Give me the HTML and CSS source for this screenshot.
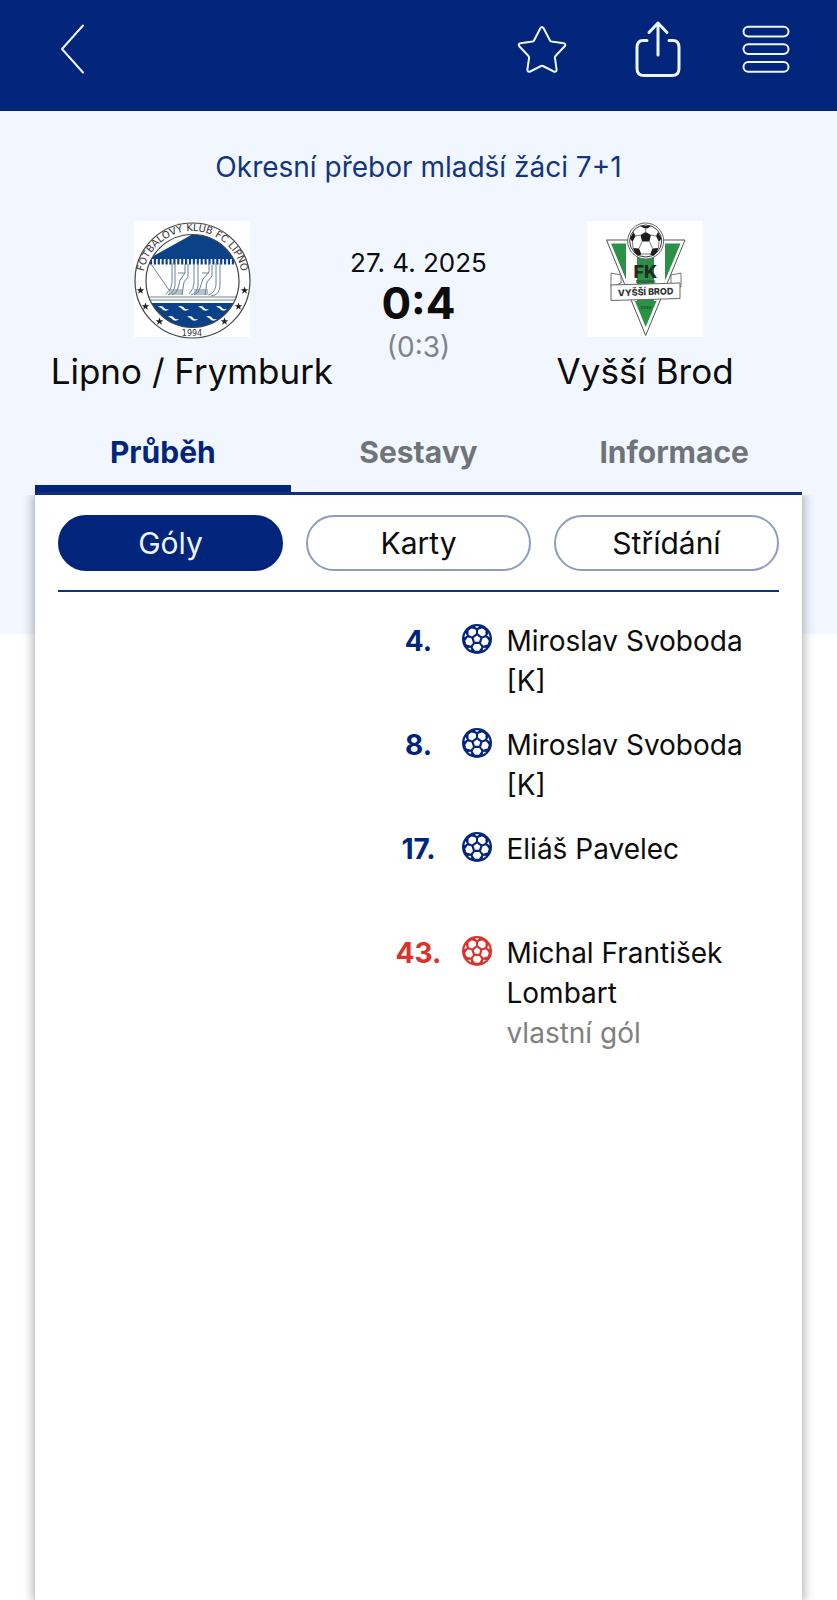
FILE: index.html
```html
<!DOCTYPE html>
<html lang="cs">
    <head>
        <meta charset="utf-8">
        <meta name="viewport" content="width=device-width, initial-scale=1">
        <title>Lipno / Frymburk – Vyšší Brod</title>
        <link rel="stylesheet" href="styles.css">
    </head>
    <body>
        <!-- shared symbols -->
        <svg class="sprite" aria-hidden="true">
            <symbol id="ball" viewBox="0 0 30 30">
                <circle cx="15" cy="15" r="15" fill="currentColor"/>
                <g fill="#fff" stroke="#fff" stroke-width="2" stroke-linejoin="round">
                    <path d="M13 21h4l1.300 2.200-1.900 2.600h-2.800l-1.900-2.600z"/>
                    <path d="M13 21h4l1.300 2.200-1.900 2.600h-2.800l-1.900-2.600z" transform="rotate(72 15 15)"/>
                    <path d="M13 21h4l1.300 2.200-1.900 2.600h-2.800l-1.900-2.600z" transform="rotate(144 15 15)"/>
                    <path d="M13 21h4l1.300 2.200-1.900 2.600h-2.800l-1.900-2.600z" transform="rotate(216 15 15)"/>
                    <path d="M13 21h4l1.300 2.200-1.900 2.600h-2.800l-1.900-2.600z" transform="rotate(288 15 15)"/>
                </g>
                <path d="M15 11.500l3.300 2.400-1.200 3.900h-4.200l-1.200-3.900z" fill="#fff"/>
                <g fill="#fff">
                    <path d="M12.800 2.300h4.400L15 4.300z"/>
                    <path d="M12.800 2.300h4.400L15 4.300z" transform="rotate(72 15 15)"/>
                    <path d="M12.800 2.300h4.400L15 4.300z" transform="rotate(144 15 15)"/>
                    <path d="M12.800 2.300h4.400L15 4.300z" transform="rotate(216 15 15)"/>
                    <path d="M12.800 2.300h4.400L15 4.300z" transform="rotate(288 15 15)"/>
                </g>
            </symbol>
            <symbol id="star" viewBox="-5 -5 10 10">
                <path d="M0-3.600L.9-1.100 3.500-1.100 1.400.4 2.200 3 0 1.400-2.200 3-1.400.4-3.500-1.100-.9-1.100z" fill="#222"/>
            </symbol>
            <symbol id="wave" viewBox="0 0 12 6">
                <path d="M0 1.200C3-.5 5 .4 6.500 2.200S9.600 4 12 3.600C10 6 6.500 6 5 4.200S2.500 2 0 1.200z" fill="#fff"/>
            </symbol>
        </svg>

        <header class="topbar">
            <button class="icon-button" type="button" aria-label="Zpět">
                <svg width="50" height="60" viewBox="0 0 50 60">
                    <path d="M35 7.500L14 31l21 23.500"/>
                </svg>
            </button>
            <div class="topbar-actions">
                <button class="icon-button" type="button" aria-label="Oblíbené">
                    <svg width="50" height="60" viewBox="0 0 50 60">
                        <path d="M23.500 10q1.500-2.200 3 0L33 22.500q.4.800 1.400 1l12.300 1.800q2.600.8 1 3L38.500 38q-.7.700-.6 1.600l1.700 11.900q0 3-2.800 2L25.900 48q-.9-.4-1.800 0L13.200 53.500q-2.800 1-2.800-2l1.700-11.900q.1-.9-.6-1.600L2.300 28.300q-1.600-2.200 1-3l12.300-1.800q1-.2 1.400-1z"/>
                    </svg>
                </button>
                <button class="icon-button" type="button" aria-label="Sdílet">
                    <svg class="bold" width="50" height="60" viewBox="-4 0 50 60">
                        <path d="M14 22.500h-4q-6 0-6 7v21q0 7 7 7h28q7 0 7-7v-21q0-7-6-7h-4"/>
                        <path d="M25 37V5M16 14.500L25 5l9 9.500"/>
                    </svg>
                </button>
                <button class="icon-button" type="button" aria-label="Menu">
                    <svg width="50" height="60" viewBox="0 0 50 60">
                        <rect x="2.500" y="8.700" width="45" height="9.700" rx="4.800"/>
                        <rect x="2.500" y="26.200" width="45" height="9.700" rx="4.800"/>
                        <rect x="2.500" y="44" width="45" height="9.700" rx="4.800"/>
                    </svg>
                </button>
            </div>
        </header>

        <main class="match">
            <h1 class="competition"><a href="#">Okresní přebor mladší žáci 7+1</a></h1>

            <section class="scoreboard">
                <div class="team">
                    <svg class="crest" viewBox="0 0 116 116" role="img" aria-label="FC Lipno">
                        <defs>
                            <path id="ring" d="M10.200 72A49.800 49.800 0 1 1 106.800 72"/>
                            <clipPath id="inner"><circle cx="58.500" cy="60" r="46.500"/></clipPath>
                        </defs>
                        <rect width="116" height="116" fill="#fff"/>
                        <circle cx="58.500" cy="59.500" r="57.500" fill="#fff" stroke="#444" stroke-width="1.200"/>
                        <g clip-path="url(#inner)">
                            <path d="M14 38L59 13h50v25z" fill="#0b4187"/>
                            <path d="M12 40.500h94" stroke="#0b4187" stroke-width="6" stroke-dasharray="2.200 1.700"/>
                            <g fill="none" stroke="#6d8496" stroke-width="1">
                                <path d="M17 43l18 26M38 42v20q0 6-6 11M41 42v22q-1 8-7 10M51 43v9l-5 7-2 8q-1 5-6 7M54 43v13l-4 5-2 13M60 42v20q0 6-5 11M64 42v22q0 8-7 10M75 42v9l-6 7-3 9q-1 5-6 7M78 44v11l-5 6-2 13M82 42v22q-1 8-8 10M86 42v22q0 10-9 11"/>
                                <path d="M35 69h14M35 71h14M35 73h14M60 69h14M60 71h14M60 73h14M44 52h7M68 52h7M12 76h94M12 79h94"/>
                            </g>
                            <path d="M10 82h98v26H10z" fill="#0b4187"/>
                        </g>
                        <g>
                            <use href="#wave" x="24" y="84" width="11" height="7"/>
                            <use href="#wave" x="44" y="84" width="11" height="7"/>
                            <use href="#wave" x="64" y="84" width="11" height="7"/>
                            <use href="#wave" x="82" y="84" width="11" height="7"/>
                            <use href="#wave" x="34" y="94" width="11" height="7"/>
                            <use href="#wave" x="53" y="94" width="11" height="7"/>
                            <use href="#wave" x="72" y="94" width="11" height="7"/>
                        </g>
                        <circle cx="58.500" cy="60" r="46.500" fill="none" stroke="#444" stroke-width="1.200"/>
                        <g>
                            <use href="#star" x="1" y="64" width="11" height="11"/>
                            <use href="#star" x="6" y="80" width="11" height="11"/>
                            <use href="#star" x="20" y="95" width="11" height="11"/>
                            <use href="#star" x="85" y="95" width="11" height="11"/>
                            <use href="#star" x="99" y="80" width="11" height="11"/>
                            <use href="#star" x="105" y="64" width="11" height="11"/>
                        </g>
                        <text class="crest-ring" text-anchor="middle"><textPath href="#ring" startOffset="50%">FOTBALOVÝ KLUB FC LIPNO</textPath></text>
                        <text class="crest-year" x="58" y="114.500" text-anchor="middle">1994</text>
                    </svg>
                    <h2 class="team-name">Lipno / Frymburk</h2>
                </div>

                <div class="result">
                    <time class="date" datetime="2025-04-27">27. 4. 2025</time>
                    <strong class="score">0:4</strong>
                    <span class="half">(0:3)</span>
                </div>

                <div class="team">
                    <svg class="crest" viewBox="0 0 116 116" role="img" aria-label="FK Vyšší Brod">
                        <defs>
                            <clipPath id="shield"><path d="M24 22.500h69.500L58.700 106z"/></clipPath>
                        </defs>
                        <rect width="116" height="116" fill="#fff"/>
                        <path d="M24 52l10 2v8L24 66zM94 52l-10 2v8l10 4z" fill="#fff" stroke="#777"/>
                        <path d="M19.500 19h78.500L58.700 114.500z" fill="#fff" stroke="#555"/>
                        <g clip-path="url(#shield)">
                            <rect x="20" y="20" width="80" height="90" fill="#2a9147"/>
                            <path d="M39 20h11v60H39zM67 20h11v60H67z" fill="#fff"/>
                        </g>
                        <circle cx="58.700" cy="20" r="18" fill="#fff" stroke="#666"/>
                        <circle cx="58.700" cy="20" r="16" fill="#fff" stroke="#333"/>
                        <g fill="#1d1d1d">
                            <path d="M53.500 14l5.200-3 5.200 3-1.500 6.500h-7.400zM46 27l6 .5 2.500 6-4 1.200q-3.500-3-4.500-7.700zM71.500 27l-6 .5-2.500 6 4 1.200q3.500-3 4.500-7.700zM43 17.500l3.500-6.500 2 4-3 6zM74.500 17.500L71 11l-2 4 3 6zM53.500 5h10.400l-3 2.200h-4z"/>
                        </g>
                        <path d="M55 20.500l-3 7M62.500 20.500l3 7M53.500 14l-5 1M64 14l5 1M58.700 11V7M54.500 33h8.500M46 27l-.5-6M71.500 27l.5-6" stroke="#777" stroke-width="1" fill="none"/>
                        <text class="crest-fk" x="58.500" y="57" text-anchor="middle">FK</text>
                        <text class="crest-small" x="58.500" y="62" text-anchor="middle">DYNAMO</text>
                        <path d="M24 64l69-2v15.500l-69 2z" fill="#fff" stroke="#666"/>
                        <text class="crest-brod" x="58.700" y="74.200" text-anchor="middle" transform="rotate(-2 58 71)">VYŠŠÍ BROD</text>
                        <text class="crest-small" x="58.700" y="88" text-anchor="middle">1946</text>
                    </svg>
                    <h2 class="team-name">Vyšší Brod</h2>
                </div>
            </section>

            <nav class="tabs">
                <a class="tab active" href="#prubeh">Průběh</a>
                <a class="tab" href="#sestavy">Sestavy</a>
                <a class="tab" href="#informace">Informace</a>
            </nav>

            <section class="panel" id="prubeh">
                <div class="filters">
                    <button class="filter selected" type="button">Góly</button>
                    <button class="filter" type="button">Karty</button>
                    <button class="filter" type="button">Střídání</button>
                </div>

                <ol class="events">
                    <li class="event">
                        <span class="minute">4.</span>
                        <svg class="ball"><use href="#ball"/></svg>
                        <div class="player">Miroslav Svoboda [K]</div>
                    </li>
                    <li class="event">
                        <span class="minute">8.</span>
                        <svg class="ball"><use href="#ball"/></svg>
                        <div class="player">Miroslav Svoboda [K]</div>
                    </li>
                    <li class="event">
                        <span class="minute">17.</span>
                        <svg class="ball"><use href="#ball"/></svg>
                        <div class="player">Eliáš Pavelec</div>
                    </li>
                    <li class="event own-goal">
                        <span class="minute">43.</span>
                        <svg class="ball"><use href="#ball"/></svg>
                        <div class="player">Michal František Lombart
                            <div class="note">vlastní gól</div>
                        </div>
                    </li>
                </ol>
            </section>
        </main>
    </body>
</html>
```
FILE: styles.css
```css
* {
    margin: 0;
    padding: 0;
    box-sizing: border-box;
}

body {
    display: flex;
    flex-direction: column;
    min-height: 100vh;
    font-family: Inter, 'Liberation Sans', sans-serif;
    font-size: 28px;
    color: #0c0c0c;
    background: #fff;
}

a {
    color: inherit;
    text-decoration: none;
}

button {
    font: inherit;
    cursor: pointer;
}

.sprite {
    position: absolute;
    width: 0;
    height: 0;
}

/* top bar */
.topbar {
    display: flex;
    justify-content: space-between;
    padding: 18px 46px 33px 48px;
    background: #00257b;
}

.topbar-actions {
    display: flex;
    gap: 62px;
}

.icon-button {
    height: 60px;
    border: 0;
    background: none;
}

.icon-button svg {
    display: block;
    overflow: visible;
    fill: none;
    stroke: #eef6ff;
    stroke-width: 2;
    stroke-linecap: round;
    stroke-linejoin: round;
}

.icon-button .bold {
    stroke-width: 3;
}

/* match header */
.match {
    flex: 1;
    display: flex;
    flex-direction: column;
    padding: 36px 35px 0;
    background: linear-gradient(#f2f7ff, #f2f7ff) no-repeat;
    background-size: 100% 523px;
}

.competition {
    font-size: 28px;
    font-weight: 400;
    line-height: 40px;
    text-align: center;
    color: #12357f;
}

.scoreboard {
    display: grid;
    grid-template-columns: 9fr 4fr 9fr;
    margin-top: 34px;
    text-align: center;
}

.crest {
    display: block;
    width: 116px;
    height: 116px;
    margin: 0 auto 12px;
    overflow: visible;
}

.crest text {
    font-family: 'DejaVu Sans', sans-serif;
    fill: #333;
}

.crest .crest-ring {
    font-size: 10px;
}

.crest .crest-year {
    font-size: 8px;
}

.crest .crest-fk {
    font-family: Inter, sans-serif;
    font-size: 18px;
    font-weight: 800;
    fill: #1d2b20;
}

.crest .crest-brod {
    font-family: Inter, sans-serif;
    font-size: 9px;
    font-weight: 800;
}

.crest .crest-small {
    font-size: 4px;
    font-weight: 700;
    fill: #1b5a2e;
}

.team-name {
    font-size: 35px;
    font-weight: 400;
    line-height: 44px;
    white-space: nowrap;
}

.result {
    display: flex;
    flex-direction: column;
    align-items: center;
    padding-top: 24px;
    white-space: nowrap;
}

.date {
    font-size: 26px;
    line-height: 36px;
}

.score {
    font-size: 44px;
    line-height: 44px;
}

.half {
    font-size: 28px;
    line-height: 44px;
    color: #808387;
}

/* tabs */
.tabs {
    display: grid;
    grid-template-columns: repeat(3, 1fr);
    margin-top: 23px;
    border-bottom: 3px solid #12307a;
}

.tab {
    padding: 14px 0 11px;
    border-bottom: 7px solid transparent;
    font-size: 30px;
    font-weight: 700;
    line-height: 44px;
    text-align: center;
    color: #6f7479;
}

.tab.active {
    border-color: #00257b;
    color: #00257b;
}

/* panel */
.panel {
    flex: 1;
    padding: 20px 23px;
    background: #fff;
    box-shadow: 0 0 10px 2px rgba(0, 0, 0, 0.3);
    clip-path: inset(0 -14px);
}

.filters {
    display: grid;
    grid-template-columns: repeat(3, 1fr);
    gap: 23px;
    padding-bottom: 19px;
    border-bottom: 2px solid #12307a;
}

.filter {
    height: 56px;
    border: 2px solid #8f9cbd;
    border-radius: 28px;
    font-size: 30px;
    background: #fff;
    color: #0c0c0c;
}

.filter.selected {
    border-color: #00257b;
    background: #00257b;
    color: #eef6ff;
}

.events {
    display: flex;
    flex-direction: column;
    gap: 24px;
    padding-top: 29px;
    list-style: none;
}

/* left half belongs to the home side */
.event {
    display: grid;
    grid-template-columns: 1fr 86px 30px calc(50% - 73px);
    min-height: 80px;
    line-height: 40px;
}

.minute {
    grid-column: 2;
    font-weight: 700;
    text-align: center;
    color: #00257b;
}

.ball {
    width: 30px;
    height: 30px;
    margin-top: 3px;
    color: #00257b;
}

.player {
    padding-left: 15px;
}

.own-goal .minute,
.own-goal .ball {
    color: #d9342b;
}

.note {
    color: #808080;
}
```
